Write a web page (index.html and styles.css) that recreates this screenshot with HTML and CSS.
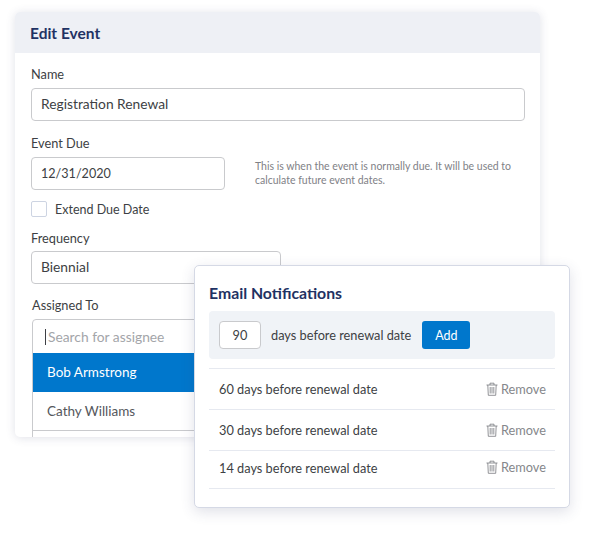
FILE: index.html
```html
<!DOCTYPE html>
<html lang="en">
<head>
  <meta charset="UTF-8" />
  <title>Edit Event</title>
  <link rel="stylesheet" href="styles.css">
</head>
<body>
  <div class="stage">
    <div class="card">
      <div class="card-header">Edit Event</div>
      <form class="card-body">
        <label class="field-label">Name</label>
        <div class="input input-name">Registration Renewal</div>

        <label class="field-label label-due">Event Due</label>
        <div class="due-row">
          <div class="input input-date">12/31/2020</div>
          <p class="hint">This is when the event is normally due. It will be used to calculate future event dates.</p>
        </div>

        <div class="extend-row">
          <span class="checkbox"></span>
          <span>Extend Due Date</span>
        </div>

        <label class="field-label label-frequency">Frequency</label>
        <div class="input input-frequency">Biennial</div>

        <label class="field-label label-assigned">Assigned To</label>
        <div class="assignee-box">
          <div class="assignee-search"><span class="caret"></span>Search for assignee</div>
          <div class="assignee-item selected">Bob Armstrong</div>
          <div class="assignee-item">Cathy Williams</div>
          <div class="assignee-item"></div>
        </div>
      </form>
    </div>

    <div class="notifications">
      <h2 class="notifications-title">Email Notifications</h2>
      <div class="add-bar">
        <div class="days-input">90</div>
        <span class="add-text">days before renewal date</span>
        <button type="button" class="add-button">Add</button>
      </div>
      <ul class="rules">
        <li class="rule rule-60">
          <span>60 days before renewal date</span>
          <span class="remove">
            <svg class="trash" viewBox="0 0 12 14"><path d="M.5 3h11M4 3V1.2h4V3M1.8 3l.5 10.3h7.4L10.2 3M4.2 5v6.5M6 5v6.5M7.8 5v6.5"/></svg>
            Remove
          </span>
        </li>
        <li class="rule rule-30">
          <span>30 days before renewal date</span>
          <span class="remove">
            <svg class="trash" viewBox="0 0 12 14"><path d="M.5 3h11M4 3V1.2h4V3M1.8 3l.5 10.3h7.4L10.2 3M4.2 5v6.5M6 5v6.5M7.8 5v6.5"/></svg>
            Remove
          </span>
        </li>
        <li class="rule rule-14">
          <span>14 days before renewal date</span>
          <span class="remove">
            <svg class="trash" viewBox="0 0 12 14"><path d="M.5 3h11M4 3V1.2h4V3M1.8 3l.5 10.3h7.4L10.2 3M4.2 5v6.5M6 5v6.5M7.8 5v6.5"/></svg>
            Remove
          </span>
        </li>
      </ul>
    </div>
  </div>
</body>
</html>
```

FILE: styles.css
```css
* {
  box-sizing: border-box;
}

body {
  margin: 0;
  background-color: white;
  font-family: "Lato", "Noto Sans", sans-serif;
  font-size: 12.75px;
  color: #3d3f44;
}

.stage {
  position: relative;
  width: 593px;
  height: 536px;
  padding: 12px 0 0 15px;
  overflow: hidden;
}

/* Edit Event card */
.card {
  width: 525px;
  height: 425px;
  overflow: hidden;
  border-radius: 5px;
  background-color: white;
  box-shadow: 0 1px 10px rgba(60, 70, 110, 0.16);
}

.card-header {
  height: 41px;
  padding: 0 15px;
  background-color: #eef0f5;
  color: #1f3263;
  font-size: 15.5px;
  font-weight: 700;
  line-height: 42px;
}

.card-body {
  padding: 13px 15px 0 16px;
}

.field-label {
  display: block;
  height: 16px;
  line-height: 16px;
}

.label-due {
  margin-top: 14px;
}

.label-frequency {
  margin-top: 13px;
}

.label-assigned {
  margin: 13px 0 0 1px;
}

.input {
  height: 33px;
  margin-top: 6px;
  padding: 0 9px;
  border: 1px solid #c9cacd;
  border-radius: 4px;
  background-color: white;
  font-size: 13.8px;
  line-height: 30px;
}

.input-name {
  width: 494px;
}

.due-row {
  display: flex;
  align-items: flex-start;
}

.input-date {
  flex: none;
  width: 194px;
  font-size: 12.6px;
  line-height: 32px;
}

.hint {
  width: 280px;
  margin: 8px 0 0 30px;
  color: #7f8186;
  font-size: 10.5px;
  line-height: 14px;
}

.extend-row {
  display: flex;
  align-items: center;
  gap: 8px;
  margin-top: 11px;
  font-size: 12.5px;
}

.checkbox {
  width: 16px;
  height: 16px;
  border: 1px solid #cdd4e2;
  border-radius: 2px;
}

.input-frequency {
  width: 250px;
  margin-top: 5px;
}

.assignee-box {
  width: 300px;
  margin: 6px 0 0 1px;
  border: 1px solid #c9cacd;
  border-radius: 4px 4px 0 0;
}

.assignee-search {
  display: flex;
  align-items: center;
  height: 33px;
  padding-left: 12px;
  color: #a3a5a9;
  font-size: 13.8px;
}

.caret {
  width: 1px;
  height: 16px;
  margin-right: 2px;
  background-color: #3d3f44;
}

.assignee-item {
  height: 39px;
  padding-left: 14px;
  border-bottom: 1px solid #c9cacd;
  color: #55575c;
  font-size: 13.5px;
  line-height: 38px;
}

.assignee-item.selected {
  border-bottom: none;
  background-color: #0077cc;
  color: white;
}

/* Email Notifications card, sits over the Edit Event card */
.notifications {
  position: absolute;
  left: 194px;
  top: 265px;
  width: 376px;
  height: 243px;
  padding: 0 14px;
  border: 1px solid #d5d9e5;
  border-radius: 5px;
  background-color: white;
  box-shadow: 0 4px 14px rgba(60, 70, 110, 0.16);
}

.notifications-title {
  margin: 0;
  padding-top: 18px;
  color: #1f3263;
  font-size: 15.8px;
  font-weight: 700;
  line-height: 17px;
}

.add-bar {
  display: flex;
  align-items: center;
  height: 48px;
  margin-top: 10px;
  padding-left: 10px;
  border-radius: 4px;
  background-color: #f0f3f7;
}

.days-input {
  width: 42px;
  height: 28px;
  border: 1px solid #c9cacd;
  border-radius: 4px;
  background-color: white;
  text-align: center;
  line-height: 26px;
}

.add-text {
  margin-left: 10px;
}

.add-button {
  width: 48px;
  height: 28px;
  margin-left: 11px;
  border: none;
  border-radius: 3px;
  background-color: #0077cc;
  color: white;
  font-family: inherit;
  font-size: 12.5px;
}

.rules {
  margin: 9px 0 0;
  padding: 0;
  list-style: none;
  border-top: 1px solid #e6e9f0;
}

.rule {
  display: flex;
  align-items: center;
  justify-content: space-between;
  padding: 0 9px 0 10px;
  border-bottom: 1px solid #e6e9f0;
}

.rule-60,
.rule-30 {
  height: 41px;
}

.rule-14 {
  height: 38px;
  padding-bottom: 3px;
}

.remove {
  display: flex;
  align-items: center;
  gap: 3px;
  color: #85878b;
}

.rule-14 .remove {
  margin-top: -2px;
}

.trash {
  width: 12px;
  height: 14px;
  fill: none;
  stroke: #77797d;
  stroke-width: 0.8;
}
```
